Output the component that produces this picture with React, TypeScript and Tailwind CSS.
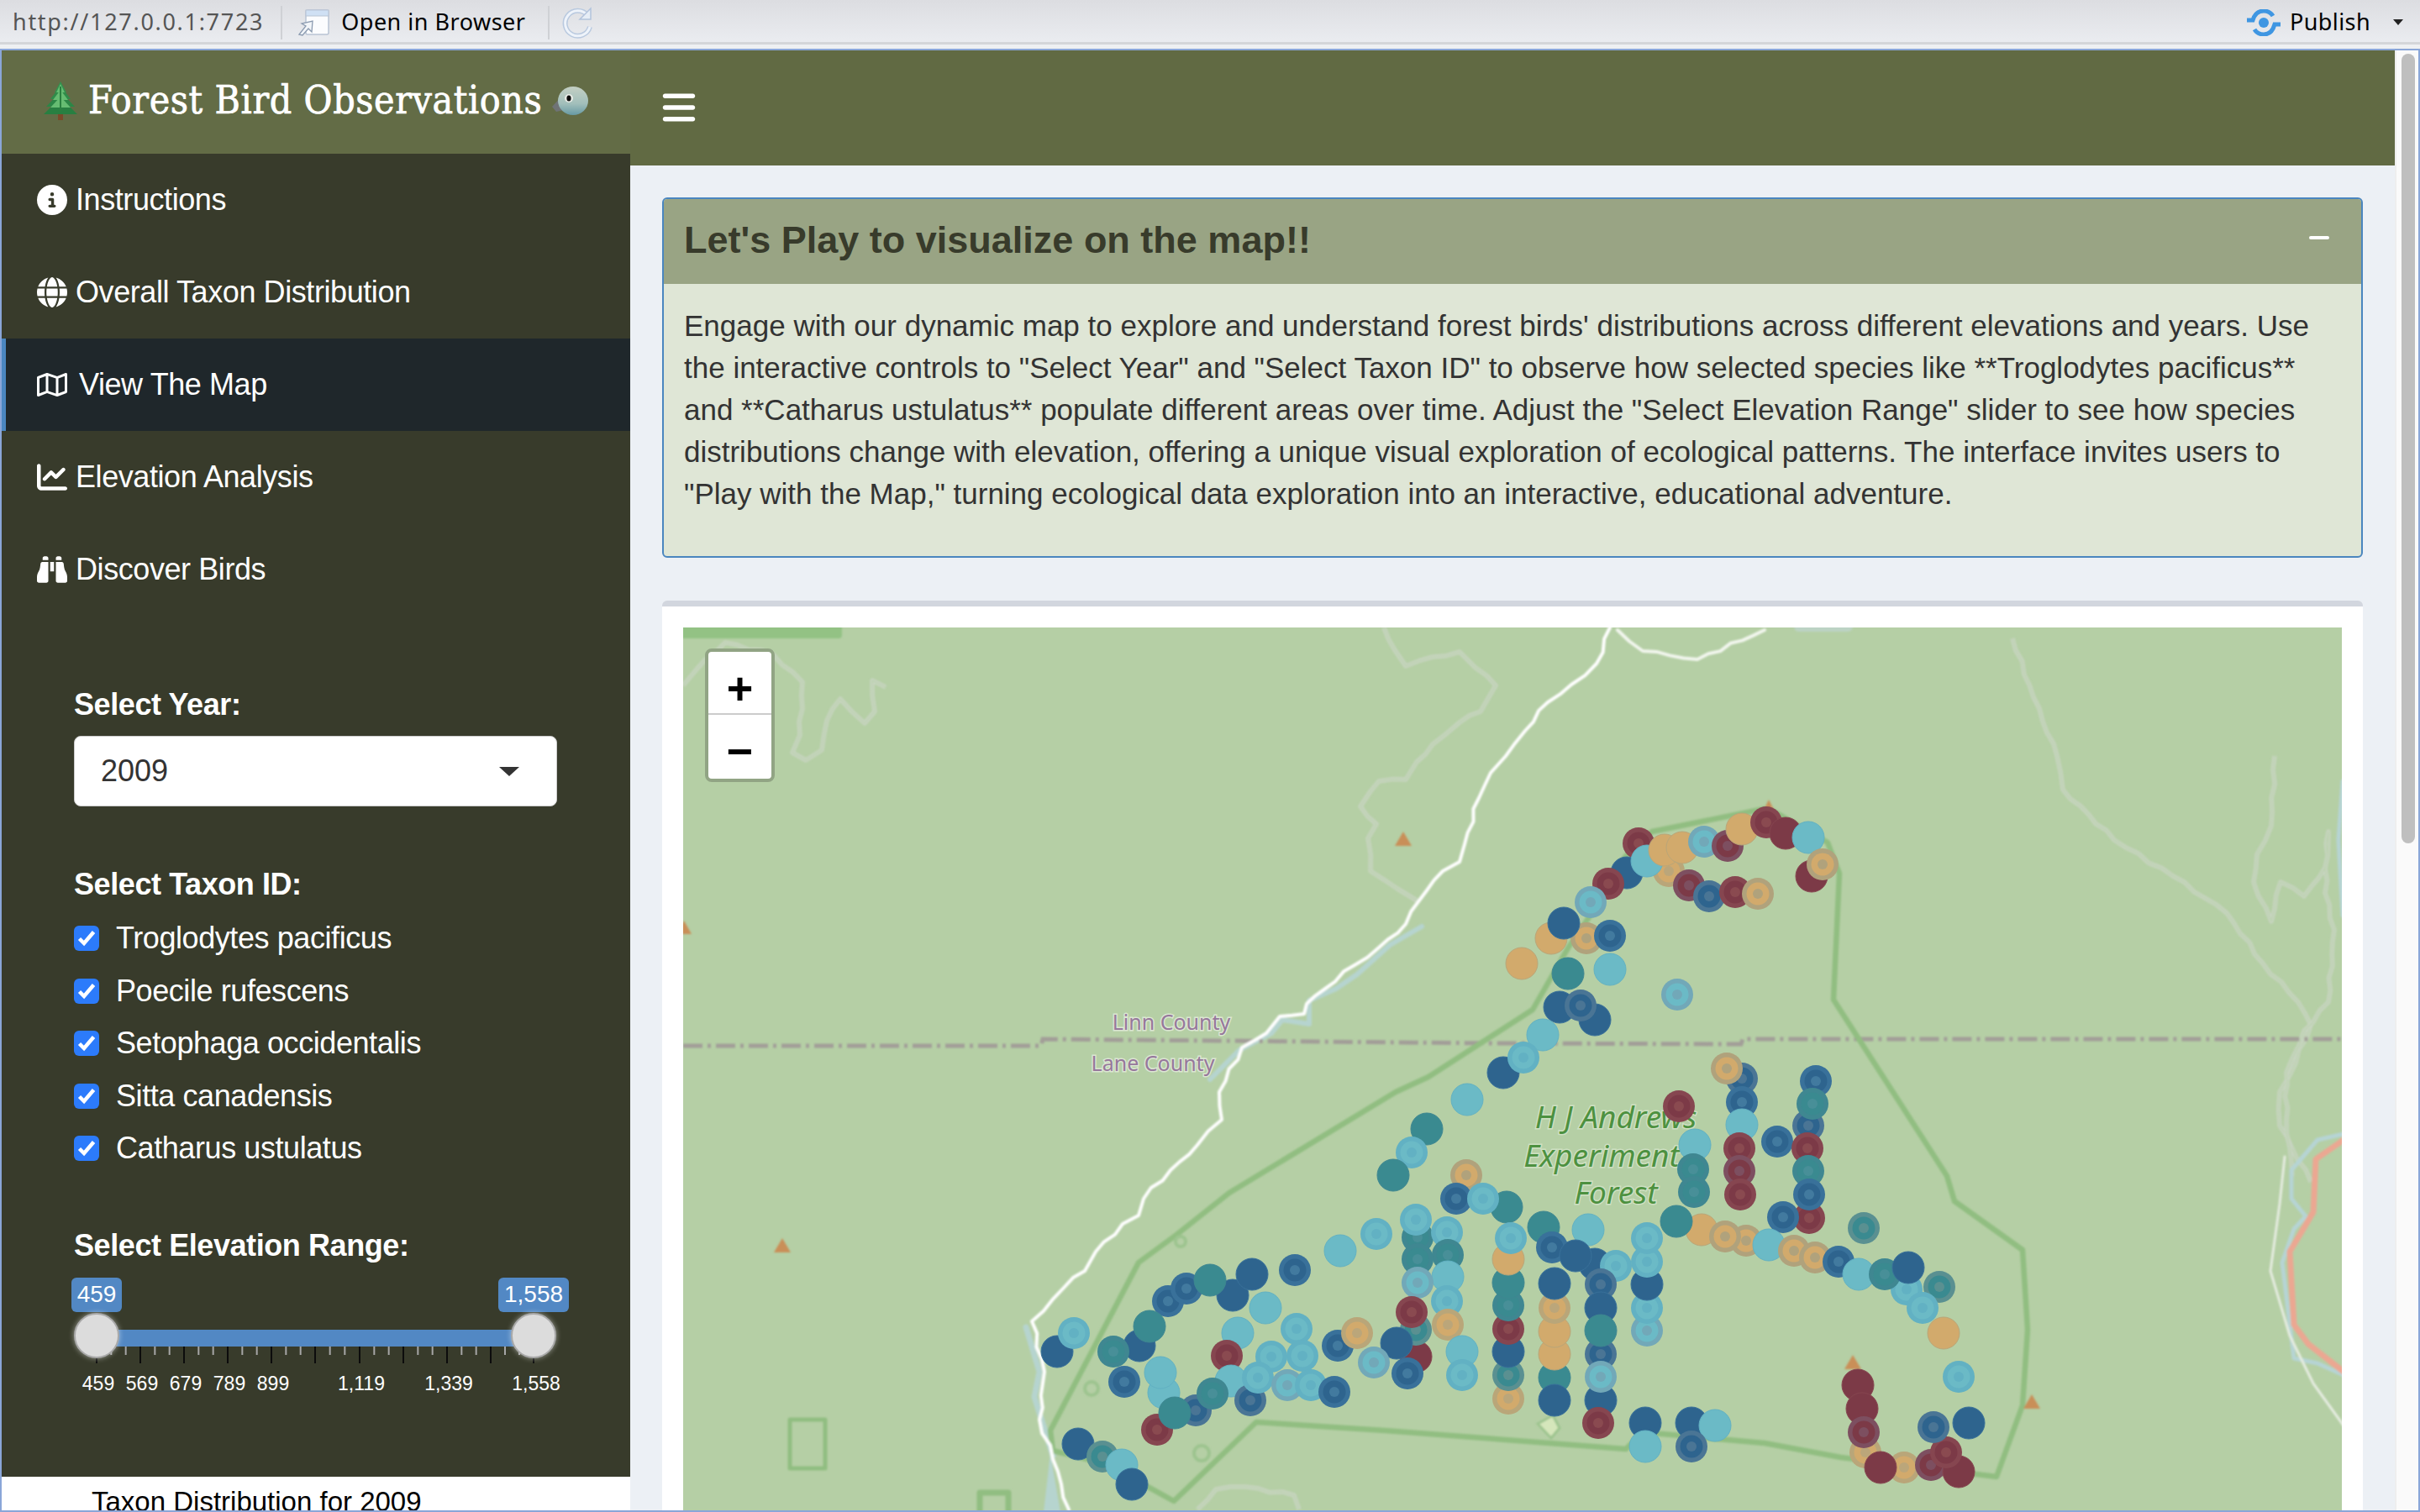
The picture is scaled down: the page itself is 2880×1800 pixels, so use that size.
import React from "react";
import { FaCircleInfo, FaGlobe, FaRegMap, FaChartLine, FaBinoculars, FaBars } from "react-icons/fa6";

const P: Record<string, [string, string, string]> = {
  d: ["#39719a", "#2e648e", "#427a9f"],
  t: ["#3f8791", "#3a8a90", "#488f98"],
  l: ["#62b1c3", "#6bbac6", "#62b1c3"],
  a: ["#b9a679", "#d2aa6c", "#bba67a"],
  m: ["#864650", "#7c3a47", "#8a4a50"],
};
const G: Record<string, string> = { d: "#4a7595", t: "#5a9091", l: "#72a8b8", a: "#b0a27c", m: "#7d4f60" };

const markers = `1950 1004 mr;1936 1039 dp;1986 1037 ar;1960 1025 lp;1981 1012 ap;2002 1009 ap;2028 1002 lg;2056 1007 mg;2073 987 ap;2102 979 mr;2125 992 mp;2152 997 lp;2156 1043 mp;2169 1029 ag;1914 1052 mr;2010 1054 mg;2034 1067 dg;2065 1062 mr;2092 1064 ag;1893 1074 lg;1846 1117 ap;1888 1117 ag;1861 1099 dp;1916 1114 dr;1811 1147 ap;1866 1159 tp;1916 1154 lp;1996 1184 lg;1856 1199 dp;1898 1214 dp;1881 1197 dg;1836 1232 lp;1789 1277 dp;1813 1259 lr;1746 1309 lp;
2073 1284 dg;2055 1272 ag;2161 1287 dr;2152 1340 dg;2157 1314 tr;1998 1317 mr;2073 1312 dr;2073 1339 lp;2115 1359 dr;2151 1367 mr;2017 1363 lp;2070 1367 mr;2015 1392 tr;2070 1394 mg;2152 1394 tr;2016 1419 tr;2071 1422 mr;2153 1450 mr;2153 1422 dr;2122 1449 dr;
1698 1344 tp;1680 1372 lr;1658 1399 tp;1745 1399 ag;1793 1437 tp;1733 1427 dr;1765 1427 lr;1687 1473 tr;1685 1452 lr;1722 1467 lr;1638 1469 lr;1595 1489 lp;1723 1494 tr;1687 1499 tr;1723 1520 lp;1687 1527 lg;1722 1549 lr;1685 1615 mp;1685 1583 tg;1680 1562 mr;1723 1577 ar;1740 1609 lp;1740 1637 lr;1662 1599 dp;1675 1635 dr;1635 1622 lg;1592 1602 dr;1615 1587 ar;1541 1512 dr;1467 1542 dp;1490 1517 dp;1390 1549 dr;1412 1534 dr;1440 1524 tp;1506 1557 lp;1543 1582 lr;1473 1587 lp;1356 1602 dp;1368 1579 tp;1325 1609 tr;1258 1609 dp;1278 1587 lr;1338 1645 dr;1385 1658 lp;1381 1634 lp;1460 1614 mr;1465 1644 lp;1513 1615 lr;1550 1614 lr;1488 1667 dg;1497 1640 lr;1532 1649 lg;1560 1649 lr;1588 1657 dr;1423 1679 dg;1443 1659 tr;1377 1702 mr;1398 1682 tp;1283 1719 dp;1312 1734 tg;1335 1744 lp;1347 1767 dp;
1795 1665 ar;1795 1637 tg;1795 1609 dp;1795 1582 mr;1795 1554 tr;1795 1527 tp;1795 1499 ap;1798 1474 lr;1837 1461 tp;1890 1464 lp;1847 1485 dr;1898 1505 dp;1875 1495 dp;1923 1507 lr;1850 1640 tp;1850 1667 dp;1850 1612 ap;1850 1585 ap;1850 1557 ar;1850 1528 dp;1905 1529 dg;1905 1557 dp;1905 1612 dg;1905 1584 tp;1905 1667 dp;1905 1639 lg;1902 1694 mr;1960 1584 lg;1960 1557 lr;1960 1529 dp;1960 1502 lr;1960 1474 lr;2078 1477 ag;2025 1464 ap;2053 1472 ag;1995 1454 tp;1958 1694 dp;1958 1722 lp;2013 1694 dp;2041 1697 lp;2013 1722 dg;
2105 1482 lp;2135 1489 ag;2160 1497 ag;2188 1502 dr;2218 1462 tg;2212 1517 lp;2269 1535 lr;2243 1517 tr;2271 1509 dp;2308 1532 tg;2288 1557 lr;2313 1587 ap;2331 1639 lr;2220 1729 ar;2211 1649 mp;2216 1677 mp;2218 1705 mg;2266 1747 ar;2238 1747 mp;2298 1744 mg;2331 1752 mp;2316 1729 mr;2301 1699 dg;2343 1694 dp`
  .split(";")
  .map((s) => s.trim().split(" "))
  .map(([x, y, k]) => ({ x: +x, y: +y, c: k[0], v: k[1] }));

const Marker = ({ x, y, c, v }: { x: number; y: number; c: string; v: string }) => {
  const [o, m, i] = P[c];
  if (v === "p") return <circle cx={x} cy={y} r={19} fill={m} stroke={o} strokeWidth={1} />;
  return (
    <g>
      <circle cx={x} cy={y} r={19} fill={v === "g" ? G[c] : o} />
      <circle cx={x} cy={y} r={13.5} fill={m} />
      <circle cx={x} cy={y} r={6} fill={v === "g" ? G[c] : i} />
    </g>
  );
};

// adds small alternating offsets to a hand-traced polyline so roads look natural
const wiggle = (d: string, amp: number) => {
  const pts = d.split(" ").map((p) => p.split(",").map(Number));
  const out: string[] = [];
  pts.forEach((p, i) => {
    out.push(p.join(","));
    const q = pts[i + 1];
    if (!q) return;
    const dx = q[0] - p[0];
    const dy = q[1] - p[1];
    const len = Math.hypot(dx, dy) || 1;
    const n = Math.max(1, Math.floor(len / 14));
    for (let k = 1; k < n; k++) {
      const t = k / n;
      const off = amp * Math.sin(k * 2.4 + i * 1.7);
      out.push(`${(p[0] + dx * t - (dy / len) * off).toFixed(1)},${(p[1] + dy * t + (dx / len) * off).toFixed(1)}`);
    }
  });
  return out.join(" ");
};

const Line = ({ d, c, w, amp = 0 }: { d: string; c: string; w: number; amp?: number }) => (
  <polyline points={amp ? wiggle(d, amp) : d} fill="none" stroke={c} strokeWidth={w} strokeLinejoin="round" strokeLinecap="round" />
);

const Trail = ({ d }: { d: string }) => {
  const pts = wiggle(d, 1.8);
  return (
    <g>
      <polyline points={pts} fill="none" stroke="#cad5c4" strokeWidth="5" strokeLinejoin="round" />
      <polyline points={pts} fill="none" stroke="#bbd2ae" strokeWidth="1.6" strokeLinejoin="round" />
    </g>
  );
};

const MapArt = () => (
  <svg className="absolute inset-0 w-full h-full" viewBox="813 747 1974 1060" preserveAspectRatio="xMinYMin meet">
    <defs>
      <filter id="soft"><feGaussianBlur stdDeviation="0.9" /></filter>
    </defs>
    <rect x="813" y="747" width="1974" height="1060" fill="#b5cfa5" />
    <g filter="url(#soft)">
      <rect x="800" y="735" width="202" height="25" rx="4" fill="#93c284" />
      <rect x="2135" y="738" width="70" height="14" rx="6" fill="#bcd3c4" />
      <Trail d="813,816 828,798 863,765 920,779 955,812 952,875 943,896 959,905 978,893 984,858 1000,832 1029,861 1041,847 1038,810 1054,818" />
      <Trail d="1647,747 1660,774 1673,793 1705,782 1737,776 1756,795 1780,816 1762,847 1737,860 1705,886 1686,907 1673,928 1641,930 1631,942 1619,960 1638,981 1628,998 1631,1037 1663,1058 1686,1072" />
      <Trail d="2395,760 2420,830 2448,900 2455,940 2516,1000 2586,1043 2650,1087 2693,1147 2735,1193 2750,1220 2725,1280 2713,1300 2713,1340 2750,1407" />
      <Trail d="2707,900 2703,983 2686,1017 2682,1050 2703,1097 2714,1050 2742,1067 2767,1033 2771,990 2767,1063 2778,1107 2771,1193 2742,1227 2721,1277 2721,1333 2728,1400" />
      <Trail d="1425,1797 1447,1773 1482,1770 1540,1780 1546,1797" />
      {/* rivers */}
      <Line c="#b6d4cf" w={6} d="1692,1103 1654,1125 1615,1160 1590,1177 1558,1191 1558,1219 1526,1214 1513,1230 1475,1250 1440,1285" />
      <Line c="#b6d4cf" w={7} d="1221,1580 1237,1633 1231,1663 1253,1733" />
      <polygon points="1250,1730 1262,1800 1242,1800" fill="#b6d4cf" />
      <Line c="#b6d4d4" w={5} d="2789,1350 2758,1357 2727,1393 2727,1427 2744,1448" />
      <Line c="#b6d4d4" w={5} d="2744,1448 2730,1463 2716,1503 2730,1617 2758,1623 2789,1637" />
      <Line c="#b6d4d4" w={5} d="2788,930 2783,1000 2788,1090" />
      {/* county line */}
      <polyline points="813,1245 1239,1245 1241,1237 1780,1242 2072,1243 2074,1237 2790,1237" fill="none" stroke="#a29e98" strokeWidth="5" strokeDasharray="23 6 4 6" />
      {/* forest boundary */}
      <Line c="#91be81" w={6.5} d="2104,962 1966,990 1934,1020 1891,1092 1867,1127 1824,1202 1700,1282 1661,1300 1463,1420 1400,1470 1355,1503 1250,1703 1253,1727 1317,1743 1397,1787 1495,1693 1648,1703 1935,1725 1955,1705 2100,1718 2191,1735 2376,1758 2407,1673 2413,1583 2407,1488 2326,1430 2317,1400 2182,1190 2189,1040 2175,1003 2104,962" />
      <Line c="#91be81" w={5} d="940,1690 982,1690 982,1748 940,1748 940,1690" />
      <Line c="#91be81" w={7} d="1166,1800 1166,1777 1200,1777 1200,1800" />
      <circle cx="1405" cy="1478" r="6" fill="none" stroke="#9dc48f" strokeWidth="4" />
      <circle cx="1299" cy="1653" r="8" fill="none" stroke="#9dc48f" strokeWidth="4" />
      <circle cx="1430" cy="1730" r="9" fill="none" stroke="#9dc48f" strokeWidth="4" />
      <polygon points="1830,1695 1848,1685 1856,1700 1846,1712" fill="#d5e6bb" stroke="#9dc48f" strokeWidth="3" />
      {/* roads */}
      <Line c="#f2f6ee" w={4} amp={2} d="1925,750 1955,775 2020,785 2100,750" />
      <Line c="#ffffff" w={4} amp={2.5} d="1916,747 1900,790 1870,815 1842,836 1815,870 1792,900 1774,920 1760,950 1743,1005 1737,1026 1717,1037 1689,1072 1673,1100 1641,1128 1612,1149 1577,1177 1555,1195 1552,1207 1523,1210 1507,1230 1478,1247 1451,1300 1454,1333 1425,1363 1393,1393 1361,1427 1355,1447 1336,1457 1304,1490 1291,1513 1266,1533 1228,1573 1243,1633 1237,1690 1253,1737 1272,1797" />
      <Line c="#e5ece0" w={3} d="2719,1377 2713,1433 2702,1513 2725,1590 2753,1647 2789,1697" />
      <Line c="#eba792" w={7} d="2789,1357 2756,1380 2753,1443 2725,1490 2730,1577 2747,1600 2789,1633" />
      {/* peaks */}
      <g fill="#c98f58">
        <polygon points="1670,990 1680,1007 1660,1007" />
        <polygon points="814,1096 823,1112 805,1112" />
        <polygon points="931,1474 941,1491 921,1491" />
        <polygon points="2205,1613 2215,1630 2195,1630" />
        <polygon points="2418,1660 2428,1677 2408,1677" />
        <polygon points="2105,952 2114,970 2096,970" />
      </g>
    </g>
    <g fontFamily="'Noto Sans','Open Sans',sans-serif" fontSize="25" fill="#96789b" stroke="#dbe6d2" strokeWidth="3" paintOrder="stroke" textAnchor="middle">
      <text x="1394" y="1226">Linn County</text>
      <text x="1372" y="1275">Lane County</text>
    </g>
    <g fontFamily="'Noto Sans','Open Sans',sans-serif" fontStyle="italic" fontSize="37" fill="#4d9140" stroke="#cfe0c3" strokeWidth="3" paintOrder="stroke" textAnchor="middle">
      <text x="1923" y="1343">H J Andrews</text>
      <text x="1906" y="1389">Experiment</text>
      <text x="1923" y="1433">Forest</text>
    </g>
    {markers.map((m, i) => (
      <Marker key={i} {...m} />
    ))}
  </svg>
);

const Tree = () => (
  <svg width="40" height="46" viewBox="0 0 40 46" className="shrink-0">
    <rect x="17" y="36" width="6" height="10" fill="#7a4a2a" />
    <polygon points="20,0 27,13 13,13" fill="#33914e" />
    <polygon points="20,5 32,21 8,21" fill="#2f8c4a" />
    <polygon points="20,12 37,30 3,30" fill="#2c8646" />
    <polygon points="20,19 40,39 0,39" fill="#287f41" />
    <g fill="#66bc72">
      <polygon points="20,3 25,13 15,13" />
      <polygon points="20,10 29,22 11,22" />
      <polygon points="20,18 32,31 8,31" />
    </g>
    <g fill="#2a8040">
      <rect x="19" y="6" width="2" height="30" />
    </g>
  </svg>
);

const Bird = () => (
  <svg width="44" height="36" viewBox="0 0 44 36" className="shrink-0">
    <defs>
      <linearGradient id="bd" x1="0" y1="0" x2="0" y2="1">
        <stop offset="0" stopColor="#c3cfc3" />
        <stop offset="0.6" stopColor="#a2bfbb" />
        <stop offset="1" stopColor="#679aa4" />
      </linearGradient>
    </defs>
    <polygon points="0,25 12,12 18,28 5,31" fill="#6f7376" />
    <ellipse cx="25" cy="18" rx="18" ry="17" fill="url(#bd)" />
    <circle cx="20" cy="15" r="5" fill="#e8ece6" />
    <ellipse cx="20" cy="15" rx="2.6" ry="3.6" fill="#0c0c0c" />
  </svg>
);

const Row = ({ icon, label, active }: { icon: React.ReactNode; label: string; active?: boolean }) => (
  <div className={`h-[110px] flex items-center text-white text-[36px] tracking-[-0.42px] ${active ? "bg-[#1f272b] border-l-[5px] border-[#4a86c0] pl-[37px]" : "pl-[42px]"}`}>
    <span className="w-[36px] flex justify-center shrink-0">{icon}</span>
    <span className={active ? "ml-[14px]" : "ml-[10px]"}>{label}</span>
  </div>
);

const Check = ({ label }: { label: string }) => (
  <div className="h-[62.5px] flex items-center text-white text-[36px] tracking-[-0.42px]">
    <span className="w-[30px] h-[30px] rounded-[6px] bg-[#2c7bfb] flex items-center justify-center shrink-0">
      <svg width="22" height="20" viewBox="0 0 22 20" fill="none" stroke="#ffffff" strokeWidth="4.5">
        <path d="M2.5 10.5 L8 16 L19.5 2.5" />
      </svg>
    </span>
    <span className="ml-[20px]">{label}</span>
  </div>
);

const majors = [115, 167, 219, 271, 323, 375, 428, 480, 532, 584, 635];
const tickLabels: [string, number][] = [["459", 117], ["569", 169], ["679", 221], ["789", 273], ["899", 325], ["1,119", 430], ["1,339", 534], ["1,558", 638]];

const Slider = () => (
  <div className="relative h-[146px] w-full">
    <div className="absolute left-[83px] top-0 w-[60px] h-[41px] rounded-[6px] bg-[#5288c4] text-white text-[28px] flex items-center justify-center">459</div>
    <div className="absolute left-[591px] top-0 w-[84px] h-[41px] rounded-[6px] bg-[#5288c4] text-white text-[28px] flex items-center justify-center">1,558</div>
    <div className="absolute left-[113px] top-[62px] w-[520px] h-[20px] bg-[#5288c4]" />
    <svg className="absolute left-0 top-[82px]" width="748" height="22">
      {majors.slice(0, -1).map((m, i) =>
        [1, 2].map((k) => <rect key={`${i}-${k}`} x={m - 2 + (k * (majors[i + 1] - m)) / 3 - 1} y="0" width="2" height="10" fill="#a6a6a6" />)
      )}
      {majors.map((m) => (
        <rect key={m} x={m - 3} y="0" width="2" height="20" fill="#0c0c0c" />
      ))}
    </svg>
    <div className="absolute left-[86px] top-[42px] w-[54px] h-[54px] rounded-full bg-[#dcdcdc] border-2 border-[#a9a9a9] shadow-[0_0_6px_rgba(255,255,255,0.5)]" />
    <div className="absolute left-[606px] top-[42px] w-[54px] h-[54px] rounded-full bg-[#dcdcdc] border-2 border-[#a9a9a9] shadow-[0_0_6px_rgba(255,255,255,0.5)]" />
    {tickLabels.map(([t, x]) => (
      <span key={t} style={{ left: x - 2 }} className="absolute top-[112px] -translate-x-1/2 text-white text-[23px] leading-[28px]">
        {t}
      </span>
    ))}
  </div>
);

export default function App() {
  return (
    <div className="w-[2880px] h-[1800px] overflow-hidden flex flex-col font-['Liberation_Sans',Arial,sans-serif] bg-white">
      {/* RStudio toolbar */}
      <div className="h-[58px] shrink-0 relative flex items-center bg-gradient-to-b from-[#dcdde1] to-[#ebedf1] border-b-[5px] border-[#eef0f2] font-['Noto_Sans',sans-serif] text-[27px]">
        <div className="absolute left-0 right-0 bottom-0 h-[3px] bg-[#d4d6d9]" />
        <span className="ml-[15px] text-[#555] tracking-[1.7px]">http://127.0.0.1:7723</span>
        <div className="ml-[20px] w-[2px] h-[40px] bg-[#cfd1d5]" />
        <svg className="ml-[18px]" width="38" height="32" viewBox="0 0 38 32">
          <rect x="10" y="1" width="27" height="29" rx="2" fill="#fbfcfe" stroke="#b9c4d4" strokeWidth="1.5" />
          <rect x="10" y="1" width="27" height="7" fill="#cfe0f4" stroke="#b9c4d4" strokeWidth="1" />
          <path d="M2 30 L10 20 L5 17 L18 14 L17 27 L13 23 L6 31 Z" fill="#f2f5f9" stroke="#8b9bb0" strokeWidth="1.3" />
        </svg>
        <span className="ml-[14px] text-black tracking-[0.5px]">Open in Browser</span>
        <div className="ml-[26px] w-[2px] h-[40px] bg-[#cfd1d5]" />
        <svg className="ml-[15px]" width="38" height="38" viewBox="0 0 38 38" fill="none">
          <path d="M30 10 A15 15 0 1 0 33 24" stroke="#b9c9df" strokeWidth="6" />
          <path d="M30 10 A15 15 0 1 0 33 24" stroke="#eef3fa" strokeWidth="3" />
          <path d="M34 2 V15 H21 Z" fill="#e6edf6" stroke="#b2c3dc" strokeWidth="1.5" />
        </svg>
        <div className="flex-1" />
        <svg width="40" height="32" viewBox="0 0 40 32" fill="none" stroke="#3f96e2" strokeWidth="5">
          <circle cx="20" cy="16" r="6" fill="#3f96e2" stroke="none" />
          <path d="M0 13 H7 C10 3 16 2 20 2 C24 2 28 3 31 8" />
          <path d="M40 18 H33 C30 29 24 30 20 30 C16 30 12 29 9 24" />
        </svg>
        <span className="ml-[11px] text-black tracking-[0.4px]">Publish</span>
        <svg className="ml-[27px] mr-[20px]" width="12" height="7" viewBox="0 0 12 7">
          <polygon points="0,0 12,0 6,7" fill="#222" />
        </svg>
      </div>

      {/* Window */}
      <div className="flex-1 min-h-0 flex border-x-2 border-y-2 border-[#8aa6d8]">
        {/* Sidebar */}
        <div className="w-[748px] shrink-0 flex flex-col bg-white overflow-hidden">
          <div className="h-[123px] shrink-0 bg-[#636c46] flex items-center pl-[50px] pb-[4px]">
            <Tree />
            <span className="ml-[13px] text-white text-[46px] font-['DejaVu_Serif_Condensed','DejaVu_Serif',serif] tracking-[0.6px] [-webkit-text-stroke:0.7px_white] whitespace-nowrap">Forest Bird Observations</span>
            <span className="ml-[12px]"><Bird /></span>
          </div>
          <div className="h-[1575px] shrink-0 bg-[#383b2b] flex flex-col">
            <Row icon={<FaCircleInfo />} label="Instructions" />
            <Row icon={<FaGlobe />} label="Overall Taxon Distribution" />
            <Row active icon={<FaRegMap />} label="View The Map" />
            <Row icon={<FaChartLine />} label="Elevation Analysis" />
            <Row icon={<FaBinoculars />} label="Discover Birds" />
            <div className="pl-[86px] pr-[87px] pt-[83px] flex flex-col text-white">
              <div className="font-bold text-[36px] tracking-[-0.42px] leading-[46px]">Select Year:</div>
              <div className="mt-[14px] h-[84px] bg-white rounded-[8px] flex items-center pl-[31px] pr-[44px] text-[#333] text-[36px] justify-between border border-[#ccc]">
                <span>2009</span>
                <svg width="24" height="11" viewBox="0 0 24 11"><polygon points="0,0 24,0 12,11" fill="#333" /></svg>
              </div>
              <div className="mt-[70px] font-bold text-[36px] tracking-[-0.42px] leading-[46px]">Select Taxon ID:</div>
              <div className="mt-[10px] flex flex-col">
                {["Troglodytes pacificus", "Poecile rufescens", "Setophaga occidentalis", "Sitta canadensis", "Catharus ustulatus"].map((t) => (
                  <Check key={t} label={t} />
                ))}
              </div>
              <div className="mt-[61px] font-bold text-[36px] tracking-[-0.42px] leading-[46px]">Select Elevation Range:</div>
            </div>
            <div className="mt-[15px]">
              <Slider />
            </div>
          </div>
          <div className="pl-[107px] pt-[5px] text-black text-[33px] whitespace-nowrap">Taxon Distribution for 2009</div>
        </div>

        {/* Main */}
        <div className="flex-1 min-w-0 flex flex-col bg-[#ecf0f5] overflow-hidden">
          <div className="h-[137px] shrink-0 bg-[#616a43] flex items-center pl-[36px] text-white text-[44px] pb-[2px]">
            <FaBars />
          </div>
          <div className="pl-[38px] pr-[38px] pt-[38px] flex flex-col">
            <div className="rounded-[6px] border-2 border-[#4a86bf] h-[429px] overflow-hidden flex flex-col bg-[#dfe6d6]">
              <div className="h-[101px] shrink-0 bg-[#99a484] flex items-center justify-between pl-[24px] pr-[38px] pb-[4px]">
                <span className="font-bold text-[45px] text-[#383b2b]">Let's Play to visualize on the map!!</span>
                <span className="w-[24px] h-[4px] bg-white rounded-[2px] mb-[6px]" />
              </div>
              <p className="pl-[24px] pr-[24px] pt-[25px] text-[35px] leading-[50px] text-[#333]">
                Engage with our dynamic map to explore and understand forest birds' distributions across different elevations and years. Use the interactive controls to "Select Year" and "Select Taxon ID" to observe how selected species like **Troglodytes pacificus** and **Catharus ustulatus** populate different areas over time. Adjust the "Select Elevation Range" slider to see how species distributions change with elevation, offering a unique visual exploration of ecological patterns. The interface invites users to "Play with the Map," turning ecological data exploration into an interactive, educational adventure.
              </p>
            </div>
            <div className="mt-[51px] h-[1200px] rounded-t-[6px] bg-white border-t-[7px] border-[#d2d6de] px-[25px] pt-[25px]">
              <div className="relative h-[1060px] overflow-hidden">
                <MapArt />
                <div className="absolute left-[26px] top-[25px] w-[83px] h-[159px] rounded-[8px] border-[4px] border-[#91a484] bg-white flex flex-col overflow-hidden">
                  <div className="h-[75px] flex items-center justify-center text-black text-[54px] font-bold leading-none border-b-2 border-[#ccc] pt-[12px]">+</div>
                  <div className="flex-1 flex items-center justify-center text-black text-[54px] font-bold leading-none pt-[10px]">−</div>
                </div>
              </div>
            </div>
          </div>
        </div>

        {/* Scrollbar */}
        <div className="w-[28px] shrink-0 bg-[#fafafa] border-l-2 border-[#eeeeee] pl-[6px] pt-[4px]">
          <div className="w-[16px] h-[940px] rounded-full bg-[#bfbfbf]" />
        </div>
      </div>
    </div>
  );
}
